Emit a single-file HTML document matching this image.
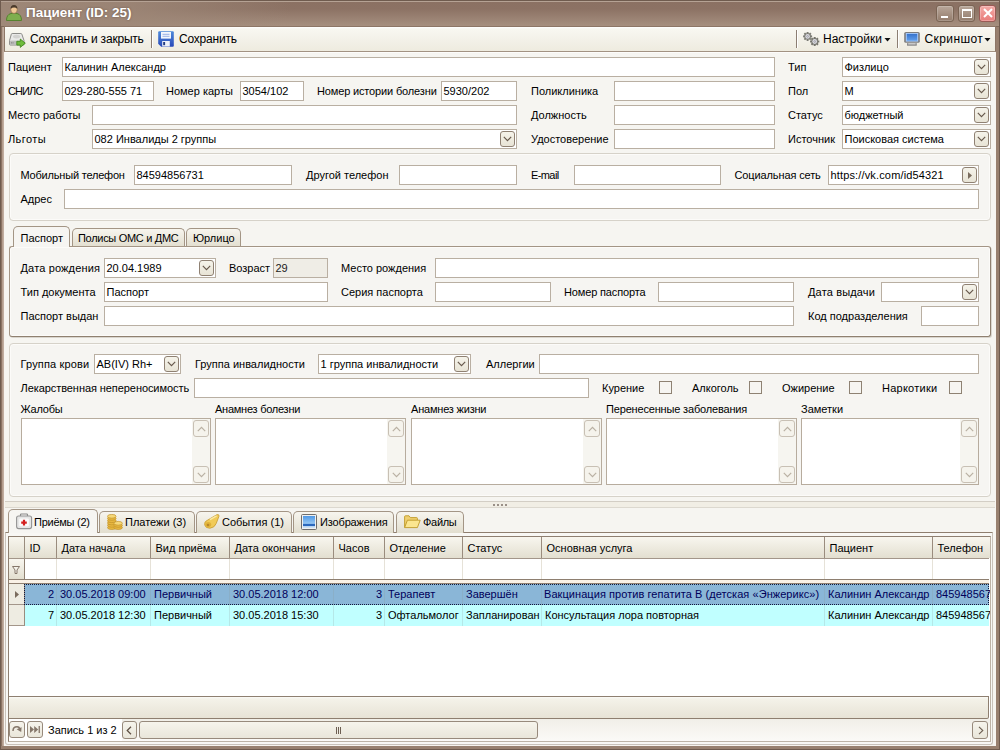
<!DOCTYPE html>
<html><head><meta charset="utf-8"><title>Пациент (ID: 25)</title>
<style>
html,body{margin:0;padding:0}
body{width:1000px;height:750px;position:relative;overflow:hidden;background:#8e7666;font:11px "Liberation Sans",sans-serif;color:#000}
div,span{box-sizing:border-box}
.a{position:absolute}
.l{position:absolute;white-space:nowrap;line-height:14px;height:14px}
.i{position:absolute;border:1px solid #b9afa2;background:#fff;height:20px;padding:3px 0 0 1.5px;line-height:13px;white-space:nowrap;overflow:hidden}
.dis{background:#efede6;color:#222}
.cb{position:absolute;right:1px;top:1px;width:15px;height:16px;border:1px solid #8f8173;border-radius:3px;background:linear-gradient(#f5f3ea,#e8e4d6)}
.cb svg{position:absolute;left:2px;top:4px}
.gb{position:absolute;border:1px solid #d6d2c9;border-radius:4px;background:#f6f5f2;box-shadow:inset 0 0 0 1px #fcfbf9}
.chk{position:absolute;width:13px;height:13px;border:1px solid #8e8273;background:#f6f5f2}
.ta{position:absolute;border:1px solid #b7ac9e;background:#fff;height:67px}
.sb{position:absolute;right:0;top:0;bottom:0;width:18px;background:#f6f5f0}
.sbb{position:absolute;left:1px;width:16px;height:17px;border:1px solid #c8c0b4;border-radius:3px;background:#f5f3ec}
.sbb svg{position:absolute;left:2.5px;top:4.5px}
.tab{position:absolute;border:1px solid #a39585;border-bottom:none;border-radius:5px 5px 0 0;background:linear-gradient(#f7f5ee,#e2decf);white-space:nowrap}
.tab.act{background:#f6f5f2}
.hd{position:absolute;top:0;height:21px;border-right:1px solid #9a8c7e;background:linear-gradient(#f8f6ef,#e3dfd0);padding:5px 0 0 4.5px;white-space:nowrap;overflow:hidden}
.c{position:absolute;top:0;height:21px;padding:4px 3px 0 3px;white-space:nowrap;overflow:hidden;border-right:1px solid rgba(140,150,150,.22)}
.r{text-align:right;padding-right:2px}
</style></head><body>
<!-- window frame -->
<div class="a" style="left:0;top:0;width:1000px;height:750px;background:#6f5b4e"></div>
<div class="a" style="left:1px;top:1px;width:998px;height:748px;background:#98806f"></div>
<div class="a" style="left:1px;top:27px;width:1px;height:719px;background:#8b7363"></div>
<div class="a" style="left:2px;top:27px;width:1px;height:719px;background:#b39d8e"></div>
<div class="a" style="left:3px;top:27px;width:1px;height:719px;background:#c1ad9f"></div>
<div class="a" style="left:4px;top:27px;width:992px;height:719px;background:#f7f4ef"></div>
<div class="a" id="title" style="left:1px;top:1px;width:998px;height:26px;background:linear-gradient(#b5a294 0,#b5a294 1px,rgba(0,0,0,0) 1px,rgba(0,0,0,0) 25px,#7f6858 25px),linear-gradient(90deg,rgba(158,136,120,.95) 0,rgba(158,136,120,.8) 130px,rgba(158,136,120,0) 290px),linear-gradient(#8b7163 1px,#8c7264 30%,#a68f7f 96%)"></div>
<svg class="a" style="left:5px;top:4px" width="18" height="18" viewBox="0 0 18 18"><path d="M1.5 16.5 Q1.5 10.5 6 9.5 L12 9.5 Q16.5 10.5 16.5 16.5 Z" fill="#7fae4e" stroke="#55822f"/><ellipse cx="9" cy="5.6" rx="3.3" ry="3.9" fill="#f1c896" stroke="#8a6a45" stroke-width=".7"/><path d="M5.6 4.8 Q5.6 1 9 1 Q12.4 1 12.4 4.8 Q10.5 3.2 9 3.4 Q7.2 3.4 5.6 4.8Z" fill="#4a3a2c"/></svg>
<div class="l" style="left:26px;top:4px;font-size:13.5px;font-weight:bold;color:#fff;line-height:18px;height:18px;text-shadow:0 0 2px rgba(70,50,40,.6)">Пациент (ID: 25)</div>
<!-- window buttons -->
<div class="a" style="left:936px;top:5px;width:18px;height:17px;border:1px solid #7a6454;border-radius:3px;background:linear-gradient(#b9a79a,#937c6c);box-shadow:inset 0 0 0 1px rgba(255,255,255,.18)"><div class="a" style="left:4px;top:10px;width:7px;height:2px;background:#fff"></div></div>
<div class="a" style="left:958px;top:5px;width:17px;height:17px;border:1px solid #7a6454;border-radius:3px;background:linear-gradient(#b9a79a,#937c6c);box-shadow:inset 0 0 0 1px rgba(255,255,255,.18)"><div class="a" style="left:3px;top:3px;width:10px;height:9px;border:1px solid #fff;border-top-width:2px"></div></div>
<div class="a" style="left:979px;top:5px;width:17px;height:17px;border:1px solid #9a5a55;border-radius:3px;background:linear-gradient(#f4aaa6,#e87c7a);box-shadow:inset 0 0 0 1px rgba(255,255,255,.25)"><svg class="a" style="left:3px;top:2px" width="10" height="10"><path d="M1 1 L9 9 M9 1 L1 9" stroke="#fff" stroke-width="2"/></svg></div>
<!-- toolbar -->
<div class="a" style="left:4px;top:26px;width:992px;height:26px;background:linear-gradient(#fff 0,#f8f7f1 2px,#eeebdf);border:1px solid #8d7666;border-bottom-color:#a29282"></div>

<!-- client -->
<div class="a" id="client" style="left:5px;top:52px;width:990px;height:693px;background:linear-gradient(#fdfcfb 0,#fdfcfb 1px,#f6f5f1 1px)"></div>

<!-- toolbar items -->
<svg class="a" style="left:9px;top:31px" width="17" height="17" viewBox="0 0 17 17"><path d="M3.2 2.5 L11.8 2.5 Q12.6 2.5 12.9 3.3 L15 9.5 L15 13.2 Q15 14 14.2 14 L1.3 14 Q.5 14 .5 13.2 L.5 9.5 L2.3 3.3 Q2.5 2.5 3.2 2.5Z" fill="#e9e9e8" stroke="#80807e" stroke-width=".9"/><path d="M.9 9.6 L14.6 9.6 L14.6 13.6 L.9 13.6Z" fill="#bdbdbb"/><ellipse cx="7.6" cy="5.6" rx="3.6" ry="1.9" fill="#d2d2d0"/><path d="M2.5 11v1.6M4 11v1.6" stroke="#8a8a88" stroke-width=".8"/><path d="M7.8 10.3 L11.3 10.3 L11.3 8 L16.3 12.2 L11.3 16.4 L11.3 14.1 L7.8 14.1Z" fill="#6fbc3c" stroke="#3c8418" stroke-width=".8"/></svg>
<div class="l" style="left:30px;top:32px;font-size:12px;letter-spacing:-.2px">Сохранить и закрыть</div>
<div class="a" style="left:151px;top:30px;width:2px;height:18px;background:linear-gradient(90deg,#8c7e72 50%,#fff 50%)"></div>
<svg class="a" style="left:158px;top:31px" width="16" height="16" viewBox="0 0 16 16"><defs><linearGradient id="fl" x1="0" y1="0" x2="0" y2="1"><stop offset="0" stop-color="#4f8ada"/><stop offset="1" stop-color="#2748b8"/></linearGradient></defs><path d="M1.2 0.3 L14.8 0.3 Q15.8 0.3 15.8 1.3 L15.8 14.8 Q15.8 15.8 14.8 15.8 L3.2 15.8 L0.2 12.8 L0.2 1.3 Q0.2 .3 1.2 .3Z" fill="url(#fl)"/><rect x="3" y="1" width="10" height="6.6" fill="#f3f7fd"/><path d="M4.5 3.3h7M4.5 5.3h7" stroke="#8fa9e2" stroke-width=".9"/><rect x="4.2" y="10" width="7.6" height="5.5" fill="#eef1f9"/><rect x="5.2" y="11" width="1.9" height="3.2" fill="#213b82"/></svg>
<div class="l" style="left:179px;top:32px;font-size:12px;letter-spacing:-.2px">Сохранить</div>
<div class="a" style="left:796px;top:30px;width:2px;height:18px;background:linear-gradient(90deg,#8c7e72 50%,#fff 50%)"></div>
<svg class="a" style="left:803px;top:31px" width="17" height="17" viewBox="0 0 17 17"><path d="M9.11 4.49L9.11 6.31L7.73 6.44L7.55 6.88L8.43 7.94L7.14 9.23L6.08 8.35L5.64 8.53L5.51 9.91L3.69 9.91L3.56 8.53L3.12 8.35L2.06 9.23L0.77 7.94L1.65 6.88L1.47 6.44L0.09 6.31L0.09 4.49L1.47 4.36L1.65 3.92L0.77 2.86L2.06 1.57L3.12 2.45L3.56 2.27L3.69 0.89L5.51 0.89L5.64 2.27L6.08 2.45L7.14 1.57L8.43 2.86L7.55 3.92L7.73 4.36Z" fill="#7b7b74"/><circle cx="4.6" cy="5.4" r="2.3" fill="#dcdce2"/><circle cx="4.6" cy="5.4" r=".9" fill="none" stroke="#8a8a92" stroke-width=".6"/><path d="M16.31 9.57L16.31 11.43L14.93 11.57L14.74 12.03L15.62 13.10L14.30 14.42L13.23 13.54L12.77 13.73L12.63 15.11L10.77 15.11L10.63 13.73L10.17 13.54L9.10 14.42L7.78 13.10L8.66 12.03L8.47 11.57L7.09 11.43L7.09 9.57L8.47 9.43L8.66 8.97L7.78 7.90L9.10 6.58L10.17 7.46L10.63 7.27L10.77 5.89L12.63 5.89L12.77 7.27L13.23 7.46L14.30 6.58L15.62 7.90L14.74 8.97L14.93 9.43Z" fill="#74746c"/><circle cx="11.7" cy="10.5" r="2.4" fill="#dcdce2"/><circle cx="11.7" cy="10.5" r=".9" fill="none" stroke="#8a8a92" stroke-width=".6"/></svg>
<div class="l" style="left:823px;top:32px;font-size:12px;letter-spacing:0px" id="t4">Настройки</div>
<svg class="a" style="left:884px;top:38px" width="7" height="4"><path d="M.5 0L6.5 0L3.5 3.4Z" fill="#111"/></svg>
<div class="a" style="left:897px;top:30px;width:2px;height:18px;background:linear-gradient(90deg,#8c7e72 50%,#fff 50%)"></div>
<svg class="a" style="left:904px;top:32px" width="16" height="14" viewBox="0 0 16 14"><defs><linearGradient id="mo" x1="0" y1="0" x2="0" y2="1"><stop offset="0" stop-color="#3673cc"/><stop offset="1" stop-color="#5f9eec"/></linearGradient></defs><rect x=".2" y="0" width="15.6" height="10.8" rx="1.6" fill="#7c7c7c"/><rect x="1.8" y="1" width="12.4" height="8.6" fill="#aacbf8"/><rect x="2.8" y="1.9" width="10.4" height="6.8" fill="url(#mo)"/><rect x="3" y="11" width="9.8" height="2.8" rx=".6" fill="#8b8b8b"/><rect x="4.2" y="11.2" width="7.4" height="1.2" fill="#d9d9d9"/></svg>
<div class="l" style="left:924.5px;top:32px;font-size:12px;letter-spacing:.4px" id="t3">Скриншот</div>
<svg class="a" style="left:984px;top:38px" width="7" height="4"><path d="M.5 0L6.5 0L3.5 3.4Z" fill="#111"/></svg>
<!-- form -->
<div class="l" style="left:8px;top:60px">Пациент</div>
<div class="i" style="left:62px;top:57px;width:713px">Калинин Александр</div>
<div class="l" style="left:788px;top:60px">Тип</div>
<div class="i" style="left:842px;top:57px;width:149px">Физлицо<span class="cb"><svg width="9" height="6"><path d="M.8 .8L4.5 4.6L8.2 .8" fill="none" stroke="#66584b" stroke-width="1.15"/></svg></span></div>
<div class="l" style="left:8px;top:84px;letter-spacing:-0.9px">СНИЛС</div>
<div class="i" style="left:62px;top:81px;width:92px">029-280-555 71</div>
<div class="l" style="left:166px;top:84px">Номер карты</div>
<div class="i" style="left:240px;top:81px;width:64px">3054/102</div>
<div class="l" style="left:317px;top:84px;letter-spacing:-0.15px">Номер истории болезни</div>
<div class="i" style="left:441px;top:81px;width:76px">5930/202</div>
<div class="l" style="left:531px;top:84px">Поликлиника</div>
<div class="i" style="left:614px;top:81px;width:161px"></div>
<div class="l" style="left:788px;top:84px">Пол</div>
<div class="i" style="left:842px;top:81px;width:149px">М<span class="cb"><svg width="9" height="6"><path d="M.8 .8L4.5 4.6L8.2 .8" fill="none" stroke="#66584b" stroke-width="1.15"/></svg></span></div>
<div class="l" style="left:8px;top:108px">Место работы</div>
<div class="i" style="left:92px;top:105px;width:425px"></div>
<div class="l" style="left:531px;top:108px">Должность</div>
<div class="i" style="left:614px;top:105px;width:161px"></div>
<div class="l" style="left:788px;top:108px">Статус</div>
<div class="i" style="left:842px;top:105px;width:149px">бюджетный<span class="cb"><svg width="9" height="6"><path d="M.8 .8L4.5 4.6L8.2 .8" fill="none" stroke="#66584b" stroke-width="1.15"/></svg></span></div>
<div class="l" style="left:8px;top:132px;letter-spacing:0.4px">Льготы</div>
<div class="i" style="left:92px;top:129px;width:425px">082 Инвалиды 2 группы<span class="cb"><svg width="9" height="6"><path d="M.8 .8L4.5 4.6L8.2 .8" fill="none" stroke="#66584b" stroke-width="1.15"/></svg></span></div>
<div class="l" style="left:531px;top:132px">Удостоверение</div>
<div class="i" style="left:614px;top:129px;width:161px"></div>
<div class="l" style="left:788px;top:132px">Источник</div>
<div class="i" style="left:842px;top:129px;width:149px">Поисковая система<span class="cb"><svg width="9" height="6"><path d="M.8 .8L4.5 4.6L8.2 .8" fill="none" stroke="#66584b" stroke-width="1.15"/></svg></span></div>
<div class="gb" style="left:9px;top:153px;width:982px;height:68px"></div>
<div class="l" style="left:20.5px;top:168px;letter-spacing:-0.2px">Мобильный телефон</div>
<div class="i" style="left:134px;top:165px;width:158px">84594856731</div>
<div class="l" style="left:306px;top:168px">Другой телефон</div>
<div class="i" style="left:399px;top:165px;width:118px"></div>
<div class="l" style="left:531px;top:168px;letter-spacing:-0.6px">E-mail</div>
<div class="i" style="left:574px;top:165px;width:147px"></div>
<div class="l" style="left:734.5px;top:168px;letter-spacing:-0.12px">Социальная сеть</div>
<div class="i" style="left:828px;top:165px;width:151px"><span style="letter-spacing:.15px">https://vk.com/id54321</span><span class="cb"><svg width="9" height="8" style="left:5px;top:4px"><path d="M0 0L4 3.5L0 7Z" fill="#7a6c5e"/></svg></span></div>
<div class="l" style="left:20.5px;top:192px">Адрес</div>
<div class="i" style="left:64px;top:189px;width:915px"></div>
<div class="tab" style="left:72px;top:228px;width:113px;height:19px;padding:3px 0 0 5px;letter-spacing:-.3px">Полисы ОМС и ДМС</div>
<div class="tab" style="left:186px;top:228px;width:55px;height:19px;padding:3px 0 0 6px">Юрлицо</div>
<div class="gb" style="left:9px;top:246px;width:982px;height:91px;border-color:#a39585 #8f8070 #8f8070 #a39585;border-radius:3px;box-shadow:inset 0 0 0 1px #fcfbf9,1px 1px 0 rgba(90,70,50,.18)"></div>
<div class="tab act" style="left:13px;top:226px;width:57px;height:21px;padding:5px 0 0 6.5px">Паспорт</div>
<div class="l" style="left:20.5px;top:261px;letter-spacing:0.15px">Дата рождения</div>
<div class="i" style="left:104px;top:258px;width:112px">20.04.1989<span class="cb"><svg width="9" height="6"><path d="M.8 .8L4.5 4.6L8.2 .8" fill="none" stroke="#66584b" stroke-width="1.15"/></svg></span></div>
<div class="l" style="left:229px;top:261px">Возраст</div>
<div class="i dis" style="left:273px;top:258px;width:55px">29</div>
<div class="l" style="left:341px;top:261px">Место рождения</div>
<div class="i" style="left:435px;top:258px;width:544px"></div>
<div class="l" style="left:20.5px;top:285px">Тип документа</div>
<div class="i" style="left:104px;top:282px;width:224px">Паспорт</div>
<div class="l" style="left:341px;top:285px">Серия паспорта</div>
<div class="i" style="left:435px;top:282px;width:116px"></div>
<div class="l" style="left:564px;top:285px;letter-spacing:-0.15px">Номер паспорта</div>
<div class="i" style="left:658px;top:282px;width:136px"></div>
<div class="l" style="left:808px;top:285px;letter-spacing:0.15px">Дата выдачи</div>
<div class="i" style="left:881px;top:282px;width:98px"><span class="cb"><svg width="9" height="6"><path d="M.8 .8L4.5 4.6L8.2 .8" fill="none" stroke="#66584b" stroke-width="1.15"/></svg></span></div>
<div class="l" style="left:20.5px;top:309px">Паспорт выдан</div>
<div class="i" style="left:104px;top:306px;width:690px"></div>
<div class="l" style="left:808px;top:309px">Код подразделения</div>
<div class="i" style="left:921px;top:306px;width:58px"></div>
<div class="gb" style="left:9px;top:343px;width:982px;height:154px"></div>
<div class="l" style="left:20.5px;top:357px;letter-spacing:.15px">Группа крови</div>
<div class="i" style="left:94px;top:354px;width:87px">AB(IV) Rh+<span class="cb"><svg width="9" height="6"><path d="M.8 .8L4.5 4.6L8.2 .8" fill="none" stroke="#66584b" stroke-width="1.15"/></svg></span></div>
<div class="l" style="left:195px;top:357px">Группа инвалидности</div>
<div class="i" style="left:318px;top:354px;width:153px">1 группа инвалидности<span class="cb"><svg width="9" height="6"><path d="M.8 .8L4.5 4.6L8.2 .8" fill="none" stroke="#66584b" stroke-width="1.15"/></svg></span></div>
<div class="l" style="left:486px;top:357px">Аллергии</div>
<div class="i" style="left:539px;top:354px;width:440px"></div>
<div class="l" style="left:20.5px;top:381px;letter-spacing:-0.07px">Лекарственная непереносимость</div>
<div class="i" style="left:194px;top:378px;width:395px"></div>
<div class="l" style="left:602px;top:381px">Курение</div>
<div class="chk" style="left:659px;top:381px"></div>
<div class="l" style="left:692px;top:381px">Алкоголь</div>
<div class="chk" style="left:749px;top:381px"></div>
<div class="l" style="left:782px;top:381px">Ожирение</div>
<div class="chk" style="left:849px;top:381px"></div>
<div class="l" style="left:882px;top:381px;letter-spacing:0.25px">Наркотики</div>
<div class="chk" style="left:949px;top:381px"></div>
<div class="l" style="left:20.5px;top:402px;letter-spacing:-0.2px">Жалобы</div>
<div class="ta" style="left:21px;top:418px;width:190px"><div class="sb"><span class="sbb" style="top:1px"><svg width="9" height="6"><path d="M.8 5.2L4.5 1.4L8.2 5.2" fill="none" stroke="#b9b0a2" stroke-width="1.2"/></svg></span><span class="sbb" style="bottom:1px"><svg width="9" height="6"><path d="M.8 .8L4.5 4.6L8.2 .8" fill="none" stroke="#b9b0a2" stroke-width="1.2"/></svg></span></div></div>
<div class="l" style="left:215px;top:402px;letter-spacing:-0.25px">Анамнез болезни</div>
<div class="ta" style="left:215px;top:418px;width:191px"><div class="sb"><span class="sbb" style="top:1px"><svg width="9" height="6"><path d="M.8 5.2L4.5 1.4L8.2 5.2" fill="none" stroke="#b9b0a2" stroke-width="1.2"/></svg></span><span class="sbb" style="bottom:1px"><svg width="9" height="6"><path d="M.8 .8L4.5 4.6L8.2 .8" fill="none" stroke="#b9b0a2" stroke-width="1.2"/></svg></span></div></div>
<div class="l" style="left:411px;top:402px;letter-spacing:-0.2px">Анамнез жизни</div>
<div class="ta" style="left:411px;top:418px;width:191px"><div class="sb"><span class="sbb" style="top:1px"><svg width="9" height="6"><path d="M.8 5.2L4.5 1.4L8.2 5.2" fill="none" stroke="#b9b0a2" stroke-width="1.2"/></svg></span><span class="sbb" style="bottom:1px"><svg width="9" height="6"><path d="M.8 .8L4.5 4.6L8.2 .8" fill="none" stroke="#b9b0a2" stroke-width="1.2"/></svg></span></div></div>
<div class="l" style="left:606px;top:402px;letter-spacing:-0.17px">Перенесенные заболевания</div>
<div class="ta" style="left:606px;top:418px;width:191px"><div class="sb"><span class="sbb" style="top:1px"><svg width="9" height="6"><path d="M.8 5.2L4.5 1.4L8.2 5.2" fill="none" stroke="#b9b0a2" stroke-width="1.2"/></svg></span><span class="sbb" style="bottom:1px"><svg width="9" height="6"><path d="M.8 .8L4.5 4.6L8.2 .8" fill="none" stroke="#b9b0a2" stroke-width="1.2"/></svg></span></div></div>
<div class="l" style="left:801px;top:402px">Заметки</div>
<div class="ta" style="left:801px;top:418px;width:178px"><div class="sb"><span class="sbb" style="top:1px"><svg width="9" height="6"><path d="M.8 5.2L4.5 1.4L8.2 5.2" fill="none" stroke="#b9b0a2" stroke-width="1.2"/></svg></span><span class="sbb" style="bottom:1px"><svg width="9" height="6"><path d="M.8 .8L4.5 4.6L8.2 .8" fill="none" stroke="#b9b0a2" stroke-width="1.2"/></svg></span></div></div>

<!-- splitter + bottom tabs -->
<div class="a" style="left:5px;top:501px;width:990px;height:1px;background:#d3cec5"></div>
<div class="a" style="left:5px;top:502px;width:990px;height:5px;background:#f1eee5"></div>
<div class="a" style="left:5px;top:507px;width:990px;height:1px;background:#dcd8cf"></div>
<div class="a" style="left:493px;top:504px;width:2px;height:2px;background:#9a9088;box-shadow:4px 0 #9a9088,8px 0 #9a9088,12px 0 #9a9088"></div>
<div class="a" style="left:5px;top:532px;width:988px;height:213px;border:1px solid #c9c2ba;border-top-color:#8e7e6e;border-radius:0 0 3px 3px;background:#f8f7f4"></div>
<div class="tab" style="left:99px;top:511px;width:96px;height:22px"><span class="l" style="left:25px;top:3px">Платежи (3)</span></div>
<div class="tab" style="left:196px;top:511px;width:96px;height:22px"><span class="l" style="left:25px;top:3px">События (1)</span></div>
<div class="tab" style="left:293px;top:511px;width:101px;height:22px"><span class="l" style="left:26px;top:3px;letter-spacing:-.15px">Изображения</span></div>
<div class="tab" style="left:396px;top:511px;width:68px;height:22px"><span class="l" style="left:26px;top:3px;letter-spacing:-.3px">Файлы</span></div>
<div class="tab act" style="left:8px;top:509px;width:90px;height:24px"><span class="l" style="left:25px;top:5px;letter-spacing:-.25px">Приёмы (2)</span></div>
<svg class="a" style="left:16px;top:513px" width="17" height="17" viewBox="0 0 17 17"><path d="M4.5 3.5 L4.5 1.8 Q4.5 1 5.3 1 L10.7 1 Q11.5 1 11.5 1.8 L11.5 3.5" fill="none" stroke="#8a8a8a" stroke-width="1.2"/><rect x=".6" y="3" width="15" height="12.6" rx="2" fill="#e6e6e6" stroke="#949494" stroke-width="1.1"/><rect x="3.3" y="5.6" width="9.6" height="7.6" rx="1" fill="#fbfbfb"/><path d="M8 6.8v5.6M5.2 9.6h5.6" stroke="#d42020" stroke-width="2.2"/></svg>
<svg class="a" style="left:107px;top:514px" width="16" height="16" viewBox="0 0 16 16"><g stroke="#c2922a" stroke-width=".7"><ellipse cx="4.8" cy="13.6" rx="4.3" ry="1.9" fill="#e8b840"/><ellipse cx="4.8" cy="11.3" rx="4.3" ry="1.9" fill="#e8b840"/><ellipse cx="4.8" cy="9" rx="4.3" ry="1.9" fill="#e8b840"/><ellipse cx="4.8" cy="6.7" rx="4.3" ry="1.9" fill="#e8b840"/><ellipse cx="4.8" cy="4.4" rx="4.3" ry="1.9" fill="#e8b840"/><ellipse cx="4.8" cy="2.3" rx="4.3" ry="1.9" fill="#f6d878"/><ellipse cx="11.2" cy="13.6" rx="4.2" ry="1.9" fill="#e8b840"/><ellipse cx="11.2" cy="11.4" rx="4.2" ry="1.9" fill="#e8b840"/><ellipse cx="11.2" cy="9.3" rx="4.2" ry="1.9" fill="#f6d878"/></g></svg>
<svg class="a" style="left:204px;top:514px" width="16" height="15" viewBox="0 0 16 15"><path d="M13.2 .5 Q15.3 .3 15 2.2 L12.2 9.5 Q10.5 13.8 6 14.2 Q1.5 14.4 .6 10.8 Q0 7.5 3.8 6 Z" fill="#f1cb58" stroke="#c79a2e" stroke-width=".8"/><ellipse cx="4.2" cy="10.6" rx="3" ry="2.6" fill="#e0b23a"/><circle cx="4" cy="11" r="1.3" fill="#b8882a"/><path d="M6 5.6 L12.6 1.8" stroke="#fae9a8" stroke-width="1.4"/></svg>
<svg class="a" style="left:301px;top:514px" width="16" height="16" viewBox="0 0 16 16"><defs><linearGradient id="im" x1="0" y1="0" x2="0" y2="1"><stop offset="0" stop-color="#4e98e6"/><stop offset=".62" stop-color="#95c6f3"/><stop offset=".66" stop-color="#2b68bd"/><stop offset=".8" stop-color="#2b68bd"/><stop offset=".84" stop-color="#b4d2f0"/><stop offset="1" stop-color="#d5e6f6"/></linearGradient></defs><rect x=".5" y=".5" width="15" height="15" rx="1" fill="#f0f0f0" stroke="#6d6d6d"/><rect x="2" y="2" width="12" height="12" fill="url(#im)"/></svg>
<svg class="a" style="left:404px;top:515px" width="17" height="14" viewBox="0 0 17 14"><path d="M.6 12.4 L.6 1.6 Q.6 .8 1.4 .8 L5 .8 L6.4 2.6 L12.6 2.6 Q13.4 2.6 13.4 3.4 L13.4 5" fill="#f0d070" stroke="#c09a28" stroke-width=".9"/><path d="M.6 12.6 L3.4 5.2 L16.2 5.2 L13.4 12.6Z" fill="#fbe690" stroke="#c09a28" stroke-width=".9"/></svg>
<div class="a" id="grid" style="left:8px;top:536px;width:983px;height:206px;border:1px solid #8e7f70;border-right-color:#bdb3a6;border-bottom-color:#bdb3a6;background:#fff;overflow:hidden">
<div class="a" style="left:0;top:0;width:980px;height:22px;border-bottom:1px solid #a3968a"><div class="hd" style="left:0px;width:16px"></div><div class="hd" style="left:16px;width:32px">ID</div><div class="hd" style="left:48px;width:94px">Дата начала</div><div class="hd" style="left:142px;width:79px">Вид приёма</div><div class="hd" style="left:221px;width:104px">Дата окончания</div><div class="hd" style="left:325px;width:51px">Часов</div><div class="hd" style="left:376px;width:78px">Отделение</div><div class="hd" style="left:454px;width:79px">Статус</div><div class="hd" style="left:533px;width:283px">Основная услуга</div><div class="hd" style="left:816px;width:108px">Пациент</div><div class="hd" style="left:924px;width:60px">Телефон</div></div>
<div class="a" style="left:0;top:22px;width:980px;height:21px;background:#fff;border-bottom:1px solid #8e7f70"><div class="hd" style="left:0;width:16px;height:20px;padding:0;border-right-color:#8e7f70"><svg class="a" style="left:3px;top:7px" width="9" height="8"><path d="M.5 .5L7.5 .5L5 4L5 7.5L3 7.5L3 4Z" fill="#f4f2ea" stroke="#85776a"/></svg></div><div class="a" style="left:47px;top:0;width:1px;height:20px;background:#e6e2d8"></div><div class="a" style="left:141px;top:0;width:1px;height:20px;background:#e6e2d8"></div><div class="a" style="left:220px;top:0;width:1px;height:20px;background:#e6e2d8"></div><div class="a" style="left:324px;top:0;width:1px;height:20px;background:#e6e2d8"></div><div class="a" style="left:375px;top:0;width:1px;height:20px;background:#e6e2d8"></div><div class="a" style="left:453px;top:0;width:1px;height:20px;background:#e6e2d8"></div><div class="a" style="left:532px;top:0;width:1px;height:20px;background:#e6e2d8"></div><div class="a" style="left:815px;top:0;width:1px;height:20px;background:#e6e2d8"></div><div class="a" style="left:923px;top:0;width:1px;height:20px;background:#e6e2d8"></div><div class="a" style="left:983px;top:0;width:1px;height:20px;background:#e6e2d8"></div></div>
<div class="a" style="left:0;top:43px;width:980px;height:4px;background:#f9f1e6;border-bottom:1px solid #8e7f70"></div>
<div class="a" style="left:0;top:47px;width:980px;height:21px;background:#8ab6d7;color:#00005a"><div class="hd" style="left:0;width:16px;height:21px;padding:0;border-bottom:1px solid #a3968a;background:#eeece2"><svg class="a" style="left:6px;top:7px" width="4" height="8"><path d="M0 0L4 3.5L0 7Z" fill="#7a6c5e"/></svg></div><div class="c r" style="left:16px;width:32px">2</div><div class="c" style="left:48px;width:94px">30.05.2018 09:00</div><div class="c" style="left:142px;width:79px">Первичный</div><div class="c" style="left:221px;width:104px">30.05.2018 12:00</div><div class="c r" style="left:325px;width:51px">3</div><div class="c" style="left:376px;width:78px">Терапевт</div><div class="c" style="left:454px;width:79px">Завершён</div><div class="c" style="left:533px;width:283px;padding-left:2px;letter-spacing:.06px">Вакцинация против гепатита В (детская «Энжерикс»)</div><div class="c" style="left:816px;width:108px">Калинин Александр</div><div class="c" style="left:924px;width:60px">84594856731</div><div class="a" style="left:15px;top:0;width:965px;height:21px;border:1px dotted #10183c"></div></div>
<div class="a" style="left:0;top:68px;width:980px;height:21px;background:#c0ffff;color:#000"><div class="hd" style="left:0;width:16px;height:21px;padding:0;border-bottom:1px solid #a3968a;background:#eeece2"></div><div class="c r" style="left:16px;width:32px">7</div><div class="c" style="left:48px;width:94px">30.05.2018 12:30</div><div class="c" style="left:142px;width:79px">Первичный</div><div class="c" style="left:221px;width:104px">30.05.2018 15:30</div><div class="c r" style="left:325px;width:51px">3</div><div class="c" style="left:376px;width:78px">Офтальмолог</div><div class="c" style="left:454px;width:79px">Запланирован</div><div class="c" style="left:533px;width:283px">Консультация лора повторная</div><div class="c" style="left:816px;width:108px">Калинин Александр</div><div class="c" style="left:924px;width:60px">84594856731</div></div>
<div class="a" style="left:0;top:159px;width:980px;height:23px;border:1px solid #8e7f70;border-left:none;border-radius:0 0 2px 0;background:linear-gradient(#fbfaf6 0,#f4f2e9 2px,#e7e3d6)"></div>
<div class="a" style="left:0;top:182px;width:113px;height:22px;background:#fff"></div>
<div class="a" style="left:113px;top:182px;width:868px;height:22px;background:linear-gradient(#f1efe8,#fbfaf7)"></div>
<div class="a" style="left:0;top:184px;width:16px;height:17px;border:1px solid #978a7c;border-radius:3px;background:linear-gradient(#f6f4ec,#e9e6da)"><svg class="a" style="left:2px;top:3px" width="10" height="8"><path d="M1 6 Q1 1.8 5 1.8 Q7.5 1.8 7.8 4.5" fill="none" stroke="#85776a" stroke-width="1.5"/><path d="M4.6 4.2L9.6 2.2L9.2 7Z" fill="#85776a"/></svg></div>
<div class="a" style="left:18px;top:184px;width:16px;height:17px;border:1px solid #978a7c;border-radius:3px;background:linear-gradient(#f6f4ec,#e9e6da)"><svg class="a" style="left:2px;top:4px" width="11" height="7"><path d="M0 0L4 3.5L0 7ZM4.2 0L8.2 3.5L4.2 7ZM8.6 0h1.3v7H8.6Z" fill="#85776a"/></svg></div>
<div class="l" style="left:39px;top:186px">Запись 1 из 2</div>
<div class="a" style="left:113px;top:184px;width:15px;height:18px;border:1px solid #978a7c;border-radius:3px;background:linear-gradient(#f6f4ec,#e9e6da)"><svg class="a" style="left:3px;top:4px" width="6" height="9"><path d="M5 .8L1.2 4.5L5 8.2" fill="none" stroke="#5e4f42" stroke-width="1.2"/></svg></div>
<div class="a" style="left:130px;top:184px;width:399px;height:18px;border:1px solid #978a7c;border-radius:3px;background:linear-gradient(#f6f4ec,#e9e6da)"><div class="a" style="left:196px;top:5px;width:1px;height:7px;background:#6d5f52;box-shadow:2px 0 #6d5f52,4px 0 #6d5f52"></div></div>
<div class="a" style="left:963px;top:184px;width:16px;height:18px;border:1px solid #978a7c;border-radius:3px;background:linear-gradient(#f6f4ec,#e9e6da)"><svg class="a" style="left:5px;top:4px" width="6" height="9"><path d="M1 .8L4.8 4.5L1 8.2" fill="none" stroke="#6d5f52" stroke-width="1.1"/></svg></div>
</div>
</body></html>
